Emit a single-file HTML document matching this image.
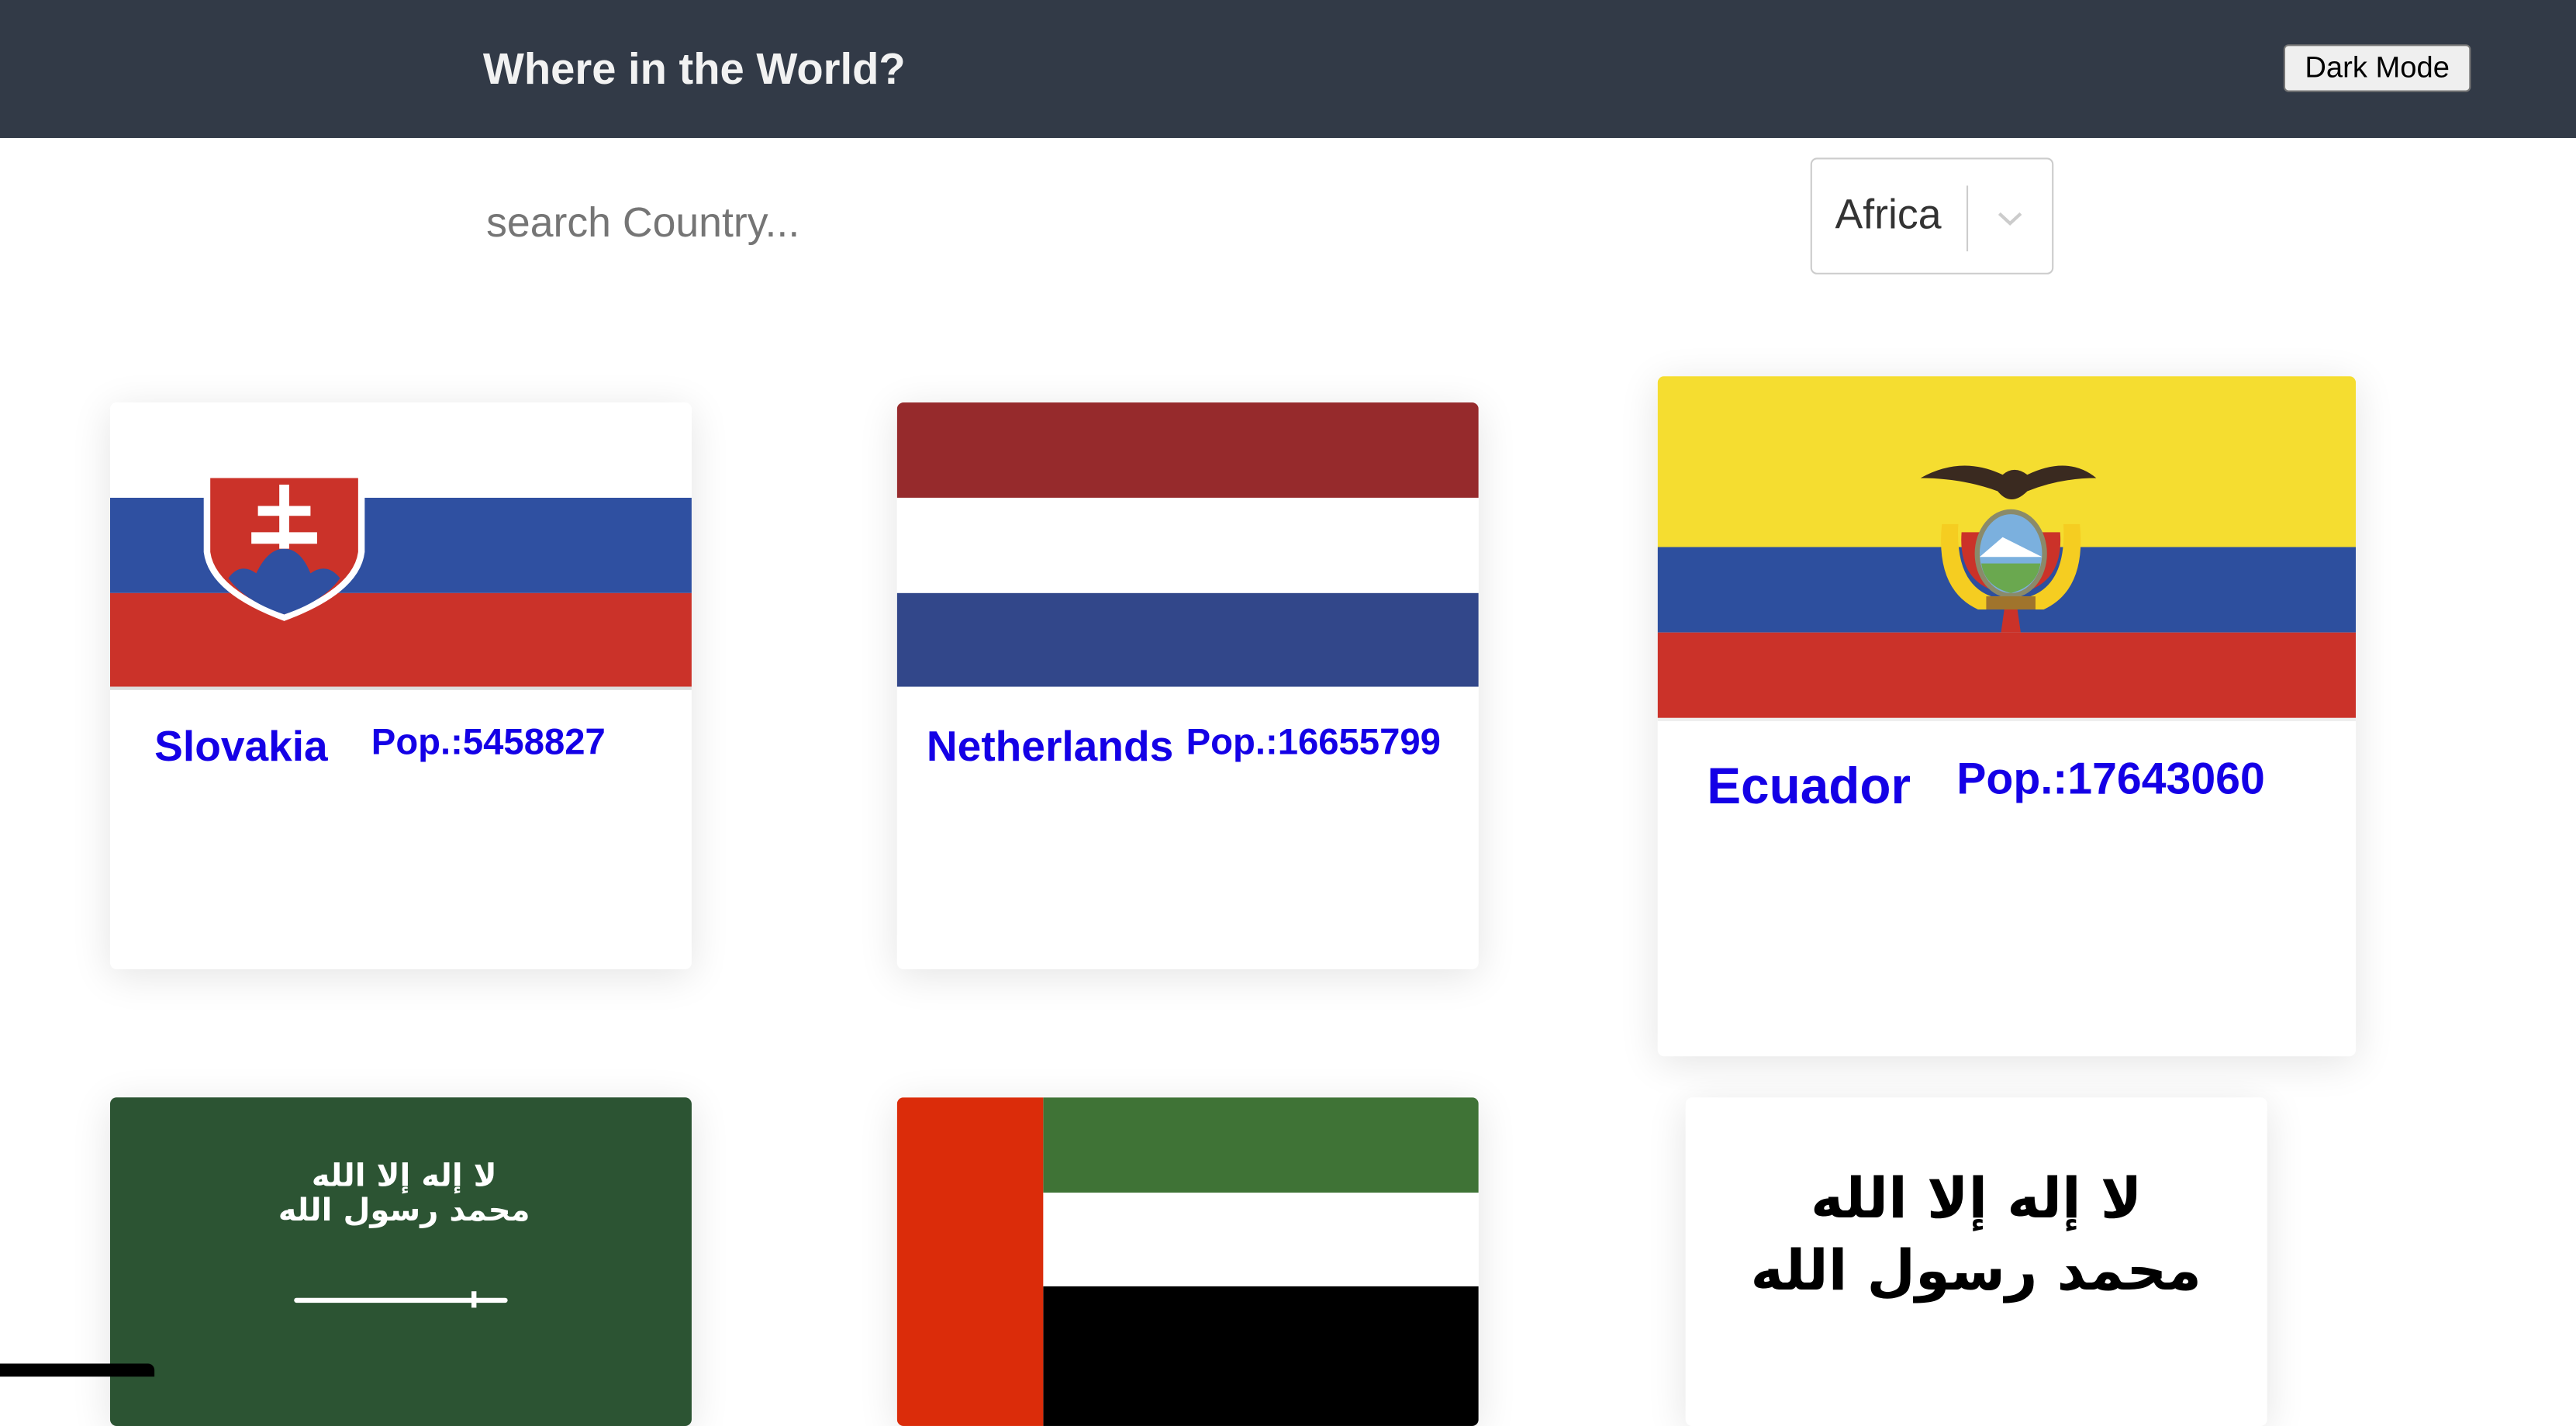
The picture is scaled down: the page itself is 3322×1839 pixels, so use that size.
<!DOCTYPE html>
<html><head><meta charset="utf-8"><style>
html,body{margin:0;padding:0;width:3322px;height:1771px;overflow:hidden;background:#fff}
#w{position:absolute;left:0;top:0;width:1568px;height:836px;transform:scale(2.118622);transform-origin:0 0;font-family:"Liberation Sans",Arial,sans-serif}
.a{position:absolute}
.card{position:absolute;background:#fff;border-radius:4px;box-shadow:0 4px 24px rgba(0,0,0,0.11);overflow:hidden}
.t{position:absolute;color:#1400e6;font-weight:bold;white-space:nowrap}
.ar{font-family:"DejaVu Sans",sans-serif;direction:rtl;position:absolute;text-align:center;white-space:nowrap}
</style></head><body><div id="w">
<div class="a" style="left:0;top:0;width:1568px;height:84px;background:#323a47"></div>
<div class="a" style="left:294px;top:27px;font-size:26.5px;font-weight:bold;color:#f2f2f2">Where in the World?</div>
<div class="a" style="left:1390px;top:27px;width:112px;height:27px;background:#efefef;border:1px solid #767676;border-radius:3px;font-size:18px;line-height:27px;text-align:center;color:#000">Dark Mode</div>
<div class="a" style="left:296px;top:122px;font-size:25.3px;color:#757575">search Country...</div>
<div class="a" style="left:1102px;top:96px;width:146px;height:69px;border:1px solid #ccc;border-radius:4px;background:#fff"></div>
<div class="a" style="left:1117px;top:117px;font-size:25.3px;color:#333">Africa</div>
<div class="a" style="left:1197px;top:113px;width:1px;height:40px;background:#ccc"></div>
<svg class="a" style="left:1215px;top:127px" width="17" height="12"><path d="M2 3 L8.5 9 L15 3" stroke="#ccc" stroke-width="2" fill="none"/></svg>

<div class="card" style="left:67px;top:245px;width:354px;height:345px">
 <div class="a" style="left:0;top:0;width:354px;height:58px;background:#fff"></div>
 <div class="a" style="left:0;top:58px;width:354px;height:58px;background:#2f50a1"></div>
 <div class="a" style="left:0;top:116px;width:354px;height:57px;background:#cb3229"></div>
 <div class="a" style="left:0;top:173px;width:354px;height:2px;background:#ddd"></div>
 <svg class="a" style="left:54px;top:41px" width="104" height="94" viewBox="0 0 104 94">
  <path d="M3 2 H101 L101 50 Q98 75 52 92 Q6 75 3 50 Z" fill="#fff"/>
  <path d="M7 5 H97 L97 50 Q94 72 52 88 Q10 72 7 50 Z" fill="#cb3229"/>
  <path d="M18 66 Q25 56 35 63 Q42 48 52 48 Q62 48 68 63 Q78 56 86 66 Q76 80 52 88 Q28 80 18 66Z" fill="#2f50a1"/>
  <path d="M49 9 H55 V22 H68 V28 H55 V38 H72 V45 H55 V48 H49 V45 H32 V38 H49 V28 H36 V22 H49Z" fill="#fff"/>
 </svg>
 <div class="t" style="left:27px;top:194px;font-size:26px">Slovakia</div>
 <div class="t" style="left:159px;top:194px;font-size:22.3px">Pop.:5458827</div>
</div>

<div class="card" style="left:546px;top:245px;width:354px;height:345px">
 <div class="a" style="left:0;top:0;width:354px;height:58px;background:#962a2c"></div>
 <div class="a" style="left:0;top:58px;width:354px;height:58px;background:#fff"></div>
 <div class="a" style="left:0;top:116px;width:354px;height:57px;background:#32478a"></div>
 <div class="t" style="left:18px;top:194px;font-size:26px">Netherlands</div>
 <div class="t" style="left:176px;top:194px;font-size:22.3px">Pop.:16655799</div>
</div>

<div class="card" style="left:1009px;top:229px;width:425px;height:414px">
 <div class="a" style="left:0;top:0;width:425px;height:104px;background:#f5dd30"></div>
 <div class="a" style="left:0;top:104px;width:425px;height:52px;background:#2d4f9e"></div>
 <div class="a" style="left:0;top:156px;width:425px;height:52px;background:#cb3229"></div>
 <div class="a" style="left:0;top:208px;width:425px;height:2px;background:#eee"></div>
 <svg class="a" style="left:155px;top:50px" width="120" height="108" viewBox="0 0 120 108">
  <path d="M5 12 Q30 -2 55 10 Q62 4 70 10 Q95 -2 112 12 Q90 12 70 20 Q60 30 52 20 Q30 12 5 12Z" fill="#3a2a20"/>
  <path d="M18 40 Q14 80 40 92 L80 92 Q106 80 102 40 L92 40 Q94 76 72 84 L48 84 Q26 76 28 40Z" fill="#f5cd21"/>
  <path d="M30 45 Q28 72 48 80 L72 80 Q92 72 90 45 Z" fill="#cb3229"/>
  <ellipse cx="60" cy="58" rx="22" ry="27" fill="#8a8a6a"/>
  <ellipse cx="60" cy="58" rx="19" ry="24" fill="#7bb0de"/>
  <path d="M41 60 L55 48 L63 52 L79 60Z" fill="#fff"/>
  <path d="M42 64 H78 Q76 78 60 82 Q44 78 42 64Z" fill="#6aa84f"/>
  <rect x="45" y="84" width="30" height="8" fill="#a0742c"/>
  <path d="M56 92 L64 92 L66 106 L54 106Z" fill="#cb3229"/>
 </svg>
 <div class="t" style="left:30px;top:232px;font-size:31px">Ecuador</div>
 <div class="t" style="left:182px;top:230px;font-size:27px">Pop.:17643060</div>
</div>

<div class="card" style="left:67px;top:668px;width:354px;height:200px;background:#2c5433">
 <div class="ar" style="left:91px;top:38px;width:176px;font-size:19px;line-height:21px;color:#fff;font-weight:bold">لا إله إلا الله<br>محمد رسول الله</div>
 <div class="a" style="left:112px;top:122px;width:130px;height:3px;background:#fff;border-radius:2px"></div>
 <div class="a" style="left:220px;top:118px;width:3px;height:10px;background:#fff"></div>
</div>

<div class="card" style="left:546px;top:668px;width:354px;height:200px">
 <div class="a" style="left:89px;top:0;width:265px;height:58px;background:#3f7336"></div>
 <div class="a" style="left:89px;top:58px;width:265px;height:57px;background:#fff"></div>
 <div class="a" style="left:89px;top:115px;width:265px;height:85px;background:#000"></div>
 <div class="a" style="left:0;top:0;width:89px;height:200px;background:#db2c0a"></div>
</div>

<div class="card" style="left:1026px;top:668px;width:354px;height:200px">
 <div class="ar" style="left:40px;top:40px;width:274px;font-size:34px;line-height:44px;font-weight:bold;color:#000">لا إله إلا الله<br>محمد رسول الله</div>
</div>

<div class="a" style="left:0;top:830px;width:94px;height:8px;background:#000;border-radius:0 4px 0 0"></div>
</div></body></html>
